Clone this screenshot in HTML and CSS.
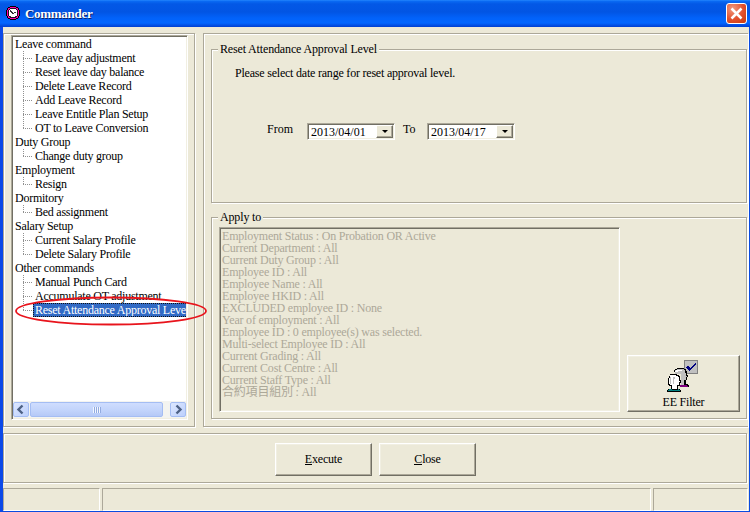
FILE: index.html
```html
<!DOCTYPE html>
<html lang="en">
<head>
<meta charset="utf-8">
<title>Commander</title>
<link rel="stylesheet" href="styles.css">
</head>
<body>
<div class="window">
  <header class="titlebar">
    <svg class="app-icon" width="14" height="14" viewBox="0 0 14 14" shape-rendering="crispEdges">
      <path fill="#000" d="M4 0h6v1h2v1h1v2h1v6h-1v2h-1v1h-2v1H4v-1H2v-1H1v-2H0V4h1V2h1V1h2z"/>
      <path fill="#f0a" d="M4 1h6v1h2v2h1v6h-1v2h-2v1H4v-1H2v-2H1V4h1V2h2z"/>
      <path fill="#201020" d="M4 2h6v1h1v1h1v6h-1v1h-1v1H4v-1H3v-1H2V4h1V3h1z"/>
      <path fill="#fff" d="M4 3h6v1h1v6h-1v1H4v-1H3V4h1z"/>
      <path fill="#333" d="M4 4h1v1h1v1h1v1h1V6h2v1H8v1H6V7H5V6H4zM4 10h1v1H4zM9 10h1v1H9z"/>
    </svg>
    <h1>Commander</h1>
    <button class="close-box" aria-label="Close window"><svg width="21" height="21" viewBox="0 0 21 21"><path d="M5.500 5.500l10 10m0-10l-10 10" stroke="#fff" stroke-width="2.500"/></svg></button>
  </header>
  <main class="work">
    <section class="panel nav-panel">
      <div class="tree">
        <ul class="nodes">
          <li>Leave command</li>
          <li class="leaf">Leave day adjustment</li>
          <li class="leaf">Reset leave day balance</li>
          <li class="leaf">Delete Leave Record</li>
          <li class="leaf">Add Leave Record</li>
          <li class="leaf">Leave Entitle Plan Setup</li>
          <li class="leaf last">OT to Leave Conversion</li>
          <li>Duty Group</li>
          <li class="leaf last">Change duty group</li>
          <li>Employment</li>
          <li class="leaf last">Resign</li>
          <li>Dormitory</li>
          <li class="leaf last">Bed assignment</li>
          <li>Salary Setup</li>
          <li class="leaf">Current Salary Profile</li>
          <li class="leaf last">Delete Salary Profile</li>
          <li>Other commands</li>
          <li class="leaf">Manual Punch Card</li>
          <li class="leaf">Accumulate OT adjustment</li>
          <li class="leaf last selected"><span>Reset Attendance Approval Level</span></li>
        </ul>
        <div class="scrollbar">
          <span class="arrow"><svg width="16" height="15"><path d="M9.500 3.500L5.500 7.500l4 4" fill="none" stroke="#4d6185" stroke-width="2.400"/></svg></span>
          <span class="thumb"><i></i></span>
          <span class="arrow right"><svg width="16" height="15"><path d="M6.500 3.500l4 4-4 4" fill="none" stroke="#4d6185" stroke-width="2.400"/></svg></span>
        </div>
      </div>
      <svg class="marker" width="196" height="32"><ellipse cx="98" cy="16" rx="95" ry="13.500" fill="none" stroke="#e8141c" stroke-width="1.800"/></svg>
    </section>
    <section class="panel detail-panel">
      <div class="group range">
        <h2>Reset Attendance Approval Level</h2>
        <p>Please select date range for reset approval level.</p>
        <div class="dates">
          <label class="from">From</label>
          <span class="date"><b>2013/04/01</b><button aria-label="Open start date"><i></i></button></span>
          <label class="to">To</label>
          <span class="date"><b>2013/04/17</b><button aria-label="Open end date"><i></i></button></span>
        </div>
      </div>
      <div class="group apply">
        <h2>Apply to</h2>
        <div class="apply-row">
          <div class="criteria">
            <div>Employment Status : On Probation OR Active</div>
            <div>Current Department : All</div>
            <div>Current Duty Group : All</div>
            <div>Employee ID : All</div>
            <div>Employee Name : All</div>
            <div>Employee HKID : All</div>
            <div>EXCLUDED employee ID : None</div>
            <div>Year of employment : All</div>
            <div>Employee ID : 0 employee(s) was selected.</div>
            <div>Multi-select Employee ID : All</div>
            <div>Current Grading : All</div>
            <div>Current Cost Centre : All</div>
            <div>Current Staff Type : All</div>
            <div>合約項目組別 : All</div>
          </div>
          <button class="btn filter">
            <svg width="32" height="33" viewBox="0 0 32 33" shape-rendering="crispEdges">
              <path fill="#808080" d="M17 0h14v14H17z"/>
              <path fill="#c0c0c0" d="M18 1h12v12H18z"/>
              <path fill="#000080" d="M20 6h2v1h1v1h1V7h1V6h1V5h1V4h1V3h1v2h-1v1h-1v1h-1v1h-1v1h-1v1h-1v1h-1v-1h-1V9h-1V8h-1z"/>
              <path fill="#000" d="M8 9h2V8h7v1h2v2h1v4h1v2h-1v3h-1v4h2v1h1v2h-8V12H7v-2h1z"/>
              <path fill="#c0c0c0" d="M8 10h2V9h7v1h1v3h1v3h1v1h-1v3h-2v5h-3V14H8z"/>
              <path fill="#fff" d="M8 11h1v-1h6v1h-4v1H8z"/>
              <path fill="#800080" d="M13 25h7v1h1v1h-8z"/>
              <path fill="#000" d="M3 14h7v1h2v1h1v4h1v3h-1v3h-2v3h2v1h1v2H0v-2h1v-1h3v-3H2v-1H1v-7h1v-2h1z"/>
              <path fill="#fff" d="M3 15h6v1h2v1h1v4h1v1h-1v3h-2v4H5v-4H3v-1H2v-6h1z"/>
              <path fill="#c0c0c0" d="M3 17h1v7H3zM6 17h2v2H7v5H6z"/>
              <path fill="#008080" d="M2 29h3v1h6v-1h1v1h1v1H1v-1h1z"/>
            </svg>
            <span>EE Filter</span>
          </button>
        </div>
      </div>
    </section>
  </main>
  <section class="panel actions">
    <button class="btn"><span><u>E</u>xecute</span></button>
    <button class="btn"><span><u>C</u>lose</span></button>
  </section>
  <footer class="status"><span></span><span></span><span></span></footer>
</div>
</body>
</html>
```

FILE: styles.css
```css
* { box-sizing: border-box; }
body {
  margin: 0;
  width: 750px;
  height: 512px;
  overflow: hidden;
  font: 12px/14px "Liberation Serif", "Noto Sans CJK TC", serif;
  color: #000;
}
h1, h2, p, ul { margin: 0; padding: 0; font-weight: normal; }
button { padding: 0; font: inherit; color: inherit; border-radius: 0; }
svg { display: block; }

.window {
  height: 512px;
  display: flex;
  flex-direction: column;
  background: #ece9d8;
  border: solid #0a4be0;
  border-width: 0 1px 1px 3px;
  border-left-color: #0b49e8;
}
.titlebar {
  flex: none;
  height: 27px;
  margin: 0 -1px 0 -3px;
  padding: 0 3px 0 6px;
  display: flex;
  align-items: center;
  background: linear-gradient(#2a8cff 0, #0a6bf4 1px, #0358e6 4px, #0255e4 12px, #0262fa 18px, #0266ff 23px, #0148dc 26px, #003fd0 27px);
}
.app-icon { margin-top: -1px; }
.titlebar h1 {
  margin: 1px auto 0 5px;
  color: #fff;
  font-size: 13px;
  font-weight: bold;
  letter-spacing: -.3px;
  text-shadow: 1px 1px #0a246a;
}
.close-box {
  width: 21px;
  height: 21px;
  border: 1px solid #fff;
  border-radius: 3px;
  background: radial-gradient(circle at 30% 25%, #f09a80, #e2502c 55%, #c73a0c);
}
.close-box svg { margin: -1px; }

.work { display: flex; margin-top: 6px; height: 395px; }
.panel {
  border: 1px solid #aca899;
  box-shadow: inset 1px 1px #fff, 1px 1px #fff;
}
.nav-panel { position: relative; flex: none; width: 192px; height: 394px; padding: 1px 0 0 7px; }
.detail-panel { flex: none; width: 545px; height: 394px; margin-left: 8px; padding: 15px 0 0 7px; border-right: 0; }

.tree {
  width: 177px;
  height: 385px;
  background: #fff;
  border: 1px solid;
  border-color: #aca899 #fff #fff #aca899;
  box-shadow: inset 1px 1px #716f64, inset -1px -1px #f1efe2;
  display: flex;
  flex-direction: column;
}
.nodes { list-style: none; padding: 1px 1px 0 2px; flex: 1; overflow: hidden; letter-spacing: -.25px; white-space: nowrap; }
.nodes li { height: 14px; padding-left: 1px; }
.nodes .leaf {
  padding-left: 21px;
  background:
    repeating-linear-gradient(90deg, #909090 0 1px, transparent 1px 2px) 9px 7px / 9px 1px no-repeat,
    repeating-linear-gradient(#909090 0 1px, transparent 1px 2px) 9px 0 / 1px 14px no-repeat;
}
.nodes .last {
  background:
    repeating-linear-gradient(90deg, #909090 0 1px, transparent 1px 2px) 9px 7px / 9px 1px no-repeat,
    repeating-linear-gradient(#909090 0 1px, transparent 1px 2px) 9px 0 / 1px 8px no-repeat;
}
.nodes .selected { padding-left: 19px; }
.selected span {
  display: block;
  height: 14px;
  line-height: 12px;
  padding-left: 1px;
  overflow: hidden;
  color: #fff;
  background: #316ac5;
  border: 1px dotted #111;
  border-right: 0;
}
.marker { position: absolute; left: 9px; top: 261px; z-index: 2; }

.scrollbar { display: flex; height: 17px; margin: 0 1px 1px; background: #f4f4f0; }
.arrow, .thumb {
  height: 15px;
  margin-top: 1px;
  border: 1px solid #a4bdf3;
  border-radius: 2px;
  background: linear-gradient(135deg, #dce7ff, #bdd0fc);
}
.arrow { width: 16px; }
.arrow svg { margin: -1px; }
.thumb { width: 133px; margin-left: 1px; background: linear-gradient(#cfddfe, #c1d3fb 60%, #b5c9f7); display: flex; justify-content: center; align-items: center; }
.thumb i { width: 8px; height: 6px; background: repeating-linear-gradient(90deg, #f2f6ff 0 1px, #92abe0 1px 2px); }
.arrow.right { margin-left: auto; }

.group { width: 536px; border: 1px solid #aca899; box-shadow: inset 1px 1px #fff, 1px 1px #fff; }
.group h2 { width: max-content; margin: -8px 0 0 6px; padding: 0 2px; font-size: 12px; line-height: 14px; background: #ece9d8; letter-spacing: -.15px; }
.range { height: 154px; }
.range p { margin: 10px 0 0 23px; line-height: 14px; letter-spacing: -.21px; }
.dates { display: flex; margin: 42px 0 0 55px; }
.dates label { height: 14px; }
.from { width: 40px; }
.to { width: 24px; }
.date {
  width: 88px;
  height: 17px;
  margin-top: 1px;
  padding: 1px;
  display: flex;
  background: #fff;
  border: 1px solid;
  border-color: #aca899 #fff #fff #aca899;
  box-shadow: inset 1px 1px #716f64, inset -1px -1px #f1efe2;
}
.date + label { margin-left: 8px; }
.date b { flex: 1; padding: 1px 0 0 2px; font-weight: normal; line-height: 13px; }
.date button {
  width: 17px;
  height: 13px;
  background: #ece9d8;
  border: 1px solid;
  border-color: #fff #716f64 #716f64 #fff;
  box-shadow: inset -1px -1px #aca899;
}
.date i { display: block; margin: 0 auto; width: 0; border: 3px solid transparent; border-top-color: #000; border-bottom: 0; }

.apply { height: 202px; margin-top: 14px; }
.apply-row { display: flex; margin-top: 3px; padding-left: 7px; }
.criteria {
  width: 401px;
  height: 185px;
  padding: 2px 2px 0;
  color: #aca899;
  line-height: 12px;
  letter-spacing: -.2px;
  border: 1px solid;
  border-color: #aca899 #fff #fff #aca899;
  box-shadow: inset 1px 1px #716f64, inset -1px -1px #f1efe2;
}
.criteria div { height: 12px; }
.btn {
  width: 97px;
  height: 33px;
  padding-bottom: 2px;
  letter-spacing: -.2px;
  background: #ece9d8;
  border: 1px solid;
  border-color: #fff #716f64 #716f64 #fff;
  box-shadow: inset -1px -1px #aca899, inset 1px 1px #f1efe2;
}
.btn u { text-decoration: none; border-bottom: 1px solid #000; display: inline-block; height: 13px; }
.filter {
  width: 113px;
  height: 57px;
  margin: 128px 0 0 7px;
  display: flex;
  flex-direction: column;
  align-items: center;
  padding-top: 4px;
}
.filter svg { margin-left: -2px; flex: none; }
.filter span { margin-top: 2px; }

.actions { flex: none; width: 744px; height: 50px; margin-top: 5px; padding: 9px 0 0 271px; display: flex; gap: 7px; }
.status { display: flex; gap: 2px; height: 23px; margin-top: 5px; }
.status span { width: 97px; border: 1px solid; border-color: #aca899 #fff #fff #aca899; }
.status span:nth-child(2) { width: 549px; }
.status span:nth-child(3) { width: 95px; }
```
